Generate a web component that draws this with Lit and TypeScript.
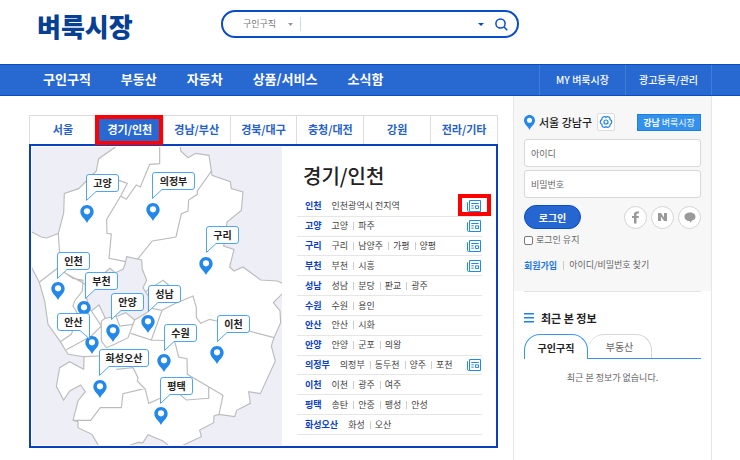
import { LitElement, html, svg, css } from "lit";
import { customElement, property } from "lit/decorators.js";
import { classMap } from "lit/directives/class-map.js";
import { styleMap } from "lit/directives/style-map.js";

interface Pin {
  name: string;
  x: number;
  y: number;
  w: number;
  pinX: number;
  pinY: number;
  flip?: boolean;
}

interface Region {
  name: string;
  towns: string[];
  paper?: boolean;
  marked?: boolean;
}

// Label position (x, y), label width and the point of the marker, in map pixels.
const PINS: Pin[] = [
  { name: "고양", x: 54, y: 27, w: 33, pinX: 55, pinY: 76 },
  { name: "의정부", x: 120, y: 25, w: 43, pinX: 121, pinY: 74 },
  { name: "구리", x: 174, y: 79, w: 33, pinX: 174, pinY: 128 },
  { name: "인천", x: 25, y: 105, w: 33, pinX: 26, pinY: 153 },
  { name: "부천", x: 53, y: 125, w: 33, pinX: 52, pinY: 172 },
  { name: "안양", x: 79, y: 146, w: 33, pinX: 81, pinY: 195 },
  { name: "성남", x: 116, y: 138, w: 33, pinX: 116, pinY: 186 },
  { name: "안산", x: 25, y: 166, w: 33, pinX: 60, pinY: 207, flip: true },
  { name: "수원", x: 132, y: 177, w: 33, pinX: 132, pinY: 225 },
  { name: "이천", x: 185, y: 168, w: 33, pinX: 185, pinY: 217 },
  { name: "화성오산", x: 67, y: 202, w: 50, pinX: 68, pinY: 251 },
  { name: "평택", x: 128, y: 230, w: 33, pinX: 129, pinY: 278 },
];

const REGIONS: Region[] = [
  { name: "인천", towns: ["인천광역시 전지역"], paper: true, marked: true },
  { name: "고양", towns: ["고양", "파주"], paper: true },
  { name: "구리", towns: ["구리", "남양주", "가평", "양평"], paper: true },
  { name: "부천", towns: ["부천", "시흥"], paper: true },
  { name: "성남", towns: ["성남", "분당", "판교", "광주"] },
  { name: "수원", towns: ["수원", "용인"] },
  { name: "안산", towns: ["안산", "시화"] },
  { name: "안양", towns: ["안양", "군포", "의왕"] },
  { name: "의정부", towns: ["의정부", "동두천", "양주", "포천"], paper: true },
  { name: "이천", towns: ["이천", "광주", "여주"] },
  { name: "평택", towns: ["송탄", "안중", "팽성", "안성"] },
  { name: "화성오산", towns: ["화성", "오산"] },
];

const LAND =
  "M268 14 212 53 205 90 152 143 109 157 107 216 91 278 55 291 40 288 6 270V370L34 424 50 480 60 550 97 602 120 640 168 647 167 685 125 662 95 680 85 736 107 777 125 750 158 732 172 752 150 780 135 838 150 842 150 860 192 880 218 925 270 914 300 915 330 904 345 905 360 881 405 900 435 925 460 915 520 887 515 867 557 845 558 825 573 820 620 827 626 808 667 787 662 752 697 758 742 660 730 615 738 590 758 545 756 510 736 485 766 455V428L748 420 698 417 645 378 618 390 605 378 618 325 587 315 597 243 640 208 645 153 610 143 607 122 552 103 543 43 503 37 480 50 458 30 457 14Z";

const SEOUL =
  "M296 347 341 357 343 385 356 418 345 440 352 452 361 465 361 512 320 537 293 515 270 525 232 532 213 492 190 510 183 500 172 455 172 430 230 395 246 382 262 395 285 385 291 370Z";

const BORDERS = [
  "M395 14V68L365 70 337 138 325 132 295 175 278 165 236 235 237 277 250 279 243 352 293 362",
  "M272 118 298 127 278 165",
  "M552 88 508 150 508 160 482 177 480 210 460 218 444 288 373 300 328 355",
  "M91 278 97 370 110 395 135 412 165 418 163 450 140 480 135 495 150 520",
  "M34 424 90 380M110 395 172 430",
  "M97 602 130 580 137 560M115 626 190 585 220 555 190 510",
  "M168 647 215 645M220 555V600L235 620 260 610 300 590 315 550 275 555 265 528M232 532 220 540V555",
  "M315 550 320 537M308 577 370 597 402 508 361 500M402 508 440 488 495 465 505 500V530L518 547 545 535 565 540 663 570 738 590",
  "M352 452 405 418 425 435",
  "M370 597 440 600 452 648 477 653 478 700 585 763 573 820",
  "M542 738V772L475 777 455 760",
  "M265 685 315 680 330 710 328 720 352 745 362 787 397 772",
  "M352 742 285 758 280 800 217 800 188 838 135 838",
];

const FONT = css`"Noto Sans CJK KR", "Liberation Sans", sans-serif`;

const base = css`
  * {
    box-sizing: border-box;
  }
  a {
    color: inherit;
    text-decoration: none;
  }
  ul {
    list-style: none;
    margin: 0;
    padding: 0;
  }
  h1,
  h2 {
    margin: 0;
  }
  button,
  input,
  select {
    font-family: inherit;
    margin: 0;
  }
  svg {
    display: block;
  }
`;

const markerShape = svg`<path d="M10 0C4.400 0 0 4.400 0 10c0 7 7 10 10 17 3-7 10-10 10-17C20 4.400 15.600 0 10 0z" fill="#2488ea"/><circle cx="10" cy="9.500" r="4.600" fill="#fff"/>`;

@customElement("region-map")
class RegionMap extends LitElement {
  static styles = [
    base,
    css`
      :host {
        display: block;
        flex: none;
        padding: 1px;
      }
      .map {
        position: relative;
        width: 250px;
      }
      .land {
        width: 100%;
        background: #eeeff6;
      }
      .callout,
      .marker {
        position: absolute;
        overflow: visible;
      }
      .label {
        position: absolute;
        height: 17px;
        line-height: 17px;
        text-align: center;
        font-size: 10px;
        font-weight: 700;
        color: #222;
      }
    `,
  ];

  private callout(w: number, flip?: boolean) {
    return flip
      ? `M3 .500H${w - 3}Q${w - 0.5} .500 ${w - 0.5} 3V26L${w - 10} 17.500H3Q.500 17.500 .500 15V3Q.500 .500 3 .500Z`
      : `M3 .500H${w - 3}Q${w - 0.5} .500 ${w - 0.5} 3V15Q${w - 0.5} 17.500 ${w - 3} 17.500H10L.500 26.500V3Q.500 .500 3 .500Z`;
  }

  render() {
    return html`<div class="map">
      <svg class="land" viewBox="12 18 750 894" aria-hidden="true">
        <path d=${LAND} fill="#fff" stroke="#bcbcbe" stroke-width="3.500" />
        <path d=${SEOUL} fill="#eeeff6" stroke="#bcbcbe" stroke-width="3.500" />
        <path d=${BORDERS.join("")} fill="none" stroke="#bcbcbe" stroke-width="3.500" />
      </svg>
      ${PINS.map(
        (p) => html`<svg
          class="marker"
          width="14"
          height="18"
          viewBox="0 0 20 27"
          style=${styleMap({ left: `${p.pinX - 7}px`, top: `${p.pinY - 18}px` })}
        >
          ${markerShape}
        </svg>`
      )}
      ${PINS.map(
        (p) => html`<svg
            class="callout"
            width=${p.w}
            height="27"
            style=${styleMap({ left: `${p.x}px`, top: `${p.y}px` })}
          >
            <path d=${this.callout(p.w, p.flip)} fill="#fff" stroke="#4fa5f3" />
          </svg>
          <a
            class="label"
            href="#"
            style=${styleMap({ left: `${p.x}px`, top: `${p.y}px`, width: `${p.w}px` })}
            >${p.name}</a
          >`
      )}
    </div>`;
  }
}

@customElement("region-list")
class RegionList extends LitElement {
  @property() heading = "";

  static styles = [
    base,
    css`
      :host {
        display: flex;
        flex-direction: column;
        flex: 1;
        min-width: 0;
        padding: 9px 14px 11px;
      }
      .title {
        padding-left: 6px;
        font-size: 20px;
        line-height: 42px;
        font-weight: 500;
        color: #222;
      }
      .rows {
        display: flex;
        flex-direction: column;
        flex: 1;
      }
      .row {
        position: relative;
        display: flex;
        align-items: center;
        flex: 1;
        gap: 10px;
        padding: 0 1px 0 8px;
        border-bottom: 1px solid #e6e6e6;
        font-size: 9px;
        line-height: 14px;
      }
      .name {
        color: #0a3fc4;
        font-weight: 700;
      }
      .towns {
        display: flex;
        align-items: center;
        flex: 1;
        color: #444;
      }
      .town + .town {
        margin-left: 5px;
        padding-left: 5px;
        background: linear-gradient(#ccc, #ccc) left center / 1px 8px no-repeat;
      }
      .mark {
        position: absolute;
        right: -9px;
        top: -3px;
        width: 33px;
        height: 22px;
        border: 4px solid #f00;
      }
    `,
  ];

  render() {
    return html`<h1 class="title">${this.heading}</h1>
      <ul class="rows">
        ${REGIONS.map(
          (r) => html`<li class="row">
            <a class="name" href="#">${r.name}</a>
            <span class="towns">${r.towns.map((t) => html`<a class="town" href="#">${t}</a>`)}</span>
            ${r.paper
              ? html`<a href="#" aria-label="신문">
                  <svg width="15" height="12" viewBox="0 0 45 36" fill="none" stroke="#2488ea" stroke-width="3">
                    <path d="M10.500 1.500H43.500V34.500H10.500ZM4.500 7V31Q4.500 34.500 8 34.500H10.500M16 10.500H38M16 17.500H23M16 24.500H23M28.500 17.500H37.500V25.500H28.500Z" />
                  </svg>
                </a>`
              : null}
            ${r.marked ? html`<span class="mark"></span>` : null}
          </li>`
        )}
      </ul>`;
  }
}

@customElement("side-panel")
class SidePanel extends LitElement {
  static styles = [
    base,
    css`
      :host {
        display: block;
        flex: none;
        width: 199px;
        border: solid #e6e6e6;
        border-width: 0 1px;
        font-size: 9px;
        line-height: 14px;
        color: #666;
      }
      .account {
        height: 195px;
        padding: 17px 10px 0;
        background: #f7f7f7;
      }
      .place {
        display: flex;
        align-items: center;
        height: 18px;
      }
      .where {
        margin: 0 5px 0 4px;
        font-size: 11px;
        font-weight: 500;
        color: #222;
      }
      .gear {
        display: grid;
        place-items: center;
        width: 18px;
        height: 18px;
        padding: 0;
        border: 1px solid #ddd;
        border-radius: 2px;
        background: #fff;
      }
      .local {
        margin-left: auto;
        width: 64px;
        height: 17px;
        line-height: 15px;
        border: 1px solid #1b7fe0;
        background: #3391ec;
        color: #fff;
        font-size: 9px;
        text-align: center;
      }
      .fields {
        display: grid;
        gap: 3px;
        margin-top: 8px;
      }
      .field {
        width: 100%;
        height: 28px;
        padding: 0 6px;
        border: 1px solid #d8d8d8;
        border-radius: 3px;
        background: #fff;
        font-size: 9px;
      }
      .field::placeholder {
        color: #666;
      }
      .actions {
        display: flex;
        align-items: center;
        gap: 4px;
        margin-top: 7px;
      }
      .login {
        width: 57px;
        height: 24px;
        margin-right: auto;
        padding: 0;
        border: 1px solid #0a4cc8;
        border-radius: 12px;
        background: #2666d0;
        color: #fff;
        font-size: 10px;
        font-weight: 700;
      }
      .social {
        display: grid;
        place-items: center;
        width: 23px;
        height: 23px;
        padding: 0;
        border: 1px solid #d4d4d4;
        border-radius: 50%;
        background: #fff;
      }
      .keep {
        display: flex;
        align-items: center;
        gap: 3px;
        margin-top: 4px;
      }
      .check {
        appearance: none;
        width: 9px;
        height: 9px;
        border: 1px solid #777;
        border-radius: 2px;
        background: #fff;
      }
      .help {
        display: flex;
        align-items: center;
        margin-top: 11px;
      }
      .join {
        margin-right: 5px;
        padding-right: 6px;
        border-right: 1px solid #ccc;
        line-height: 9px;
        font-weight: 700;
        color: #1c78e0;
      }
      .recent {
        margin: 0 10px;
        border-top: 1px solid #e2e2e2;
      }
      .recent-title {
        display: flex;
        align-items: center;
        gap: 7px;
        padding: 17px 0 7px;
        font-size: 11px;
        line-height: 18px;
        color: #222;
      }
      .tabs {
        display: flex;
        height: 25px;
        background: linear-gradient(#3a94ee, #3a94ee) left bottom / 100% 1px no-repeat;
      }
      .tab {
        width: 64px;
        height: 24px;
        padding: 0;
        border: 1px solid #d6d6d6;
        border-bottom: 0;
        border-left: 0;
        border-radius: 16px 16px 0 0;
        background: #fff;
        font-size: 10px;
        color: #666;
      }
      .tab.on {
        height: 25px;
        border: 1px solid #3a94ee;
        border-bottom: 0;
        font-weight: 700;
        color: #222;
      }
      .empty {
        margin: 12px 0 0;
        text-align: center;
      }
    `,
  ];

  render() {
    return html`<section class="account">
        <div class="place">
          <svg width="11" height="15" viewBox="0 0 20 27" preserveAspectRatio="none">${markerShape}</svg>
          <span class="where">서울 강남구</span>
          <button class="gear" aria-label="지역 설정">
            <svg width="14" height="14" viewBox="3 3 22 22" fill="none" stroke="#1c80e4" stroke-width="1.800">
              <path d="M14 6.500A4 4 0 0 1 20.500 10.250A4 4 0 0 1 20.500 17.750A4 4 0 0 1 14 21.500A4 4 0 0 1 7.500 17.750A4 4 0 0 1 7.500 10.250A4 4 0 0 1 14 6.500Z" />
              <circle cx="14" cy="14" r="3.200" />
            </svg>
          </button>
          <a class="local" href="#"><b>강남</b> 벼룩시장</a>
        </div>
        <div class="fields">
          <input class="field" type="text" placeholder="아이디" aria-label="아이디" />
          <input class="field" type="password" placeholder="비밀번호" aria-label="비밀번호" />
        </div>
        <div class="actions">
          <button class="login">로그인</button>
          <button class="social" aria-label="페이스북">
            <svg width="9" height="13" viewBox="0 0 18 26" fill="#999">
              <path d="M6 25V14H2V10H6V7Q6 1 12 1H16V5H13Q11 5 11 7.500V10H16L15 14H11V25Z" />
            </svg>
          </button>
          <button class="social" aria-label="네이버">
            <svg width="9" height="8" viewBox="0 0 18 16" fill="#999">
              <path d="M0 0H6L12 9V0H18V16H12L6 7V16H0Z" />
            </svg>
          </button>
          <button class="social" aria-label="카카오">
            <svg width="12" height="11" viewBox="0 0 24 22" fill="#999">
              <path d="M12 1C5.500 1 1 4.500 1 9.500S5.500 18 11 18L14 22 15 17.600C20 16.800 23 13.500 23 9.500 23 4.500 18.500 1 12 1z" />
            </svg>
          </button>
        </div>
        <label class="keep"><input class="check" type="checkbox" />로그인 유지</label>
        <div class="help">
          <a class="join" href="#">회원가입</a>
          <a href="#">아이디/비밀번호 찾기</a>
        </div>
      </section>
      <section class="recent">
        <h2 class="recent-title">
          <svg width="10" height="10" viewBox="0 0 10 10" fill="#1c80e4"><path d="M0 0H10V1.500H0ZM0 4H10V5.500H0ZM0 8H10V9.500H0Z" /></svg>
          최근 본 정보
        </h2>
        <div class="tabs">
          <button class="tab on">구인구직</button>
          <button class="tab">부동산</button>
        </div>
        <p class="empty">최근 본 정보가 없습니다.</p>
      </section>`;
  }
}

@customElement("app-root")
class AppRoot extends LitElement {
  static styles = [
    base,
    css`
      :host {
        display: flex;
        flex-direction: column;
        min-height: 100vh;
        background: #fff;
        font-family: ${FONT};
      }
      .header {
        display: flex;
        align-items: flex-start;
        height: 64px;
        padding: 10px 28px 0 37px;
      }
      .logo {
        width: 184px;
        font-size: 26px;
        line-height: 32px;
        font-weight: 900;
        color: #073f92;
      }
      .search {
        display: flex;
        align-items: center;
        width: 298px;
        height: 28px;
        padding: 0 9px 0 20px;
        border: 2px solid #0a4cc8;
        border-radius: 14px;
      }
      .kind {
        appearance: none;
        width: 56px;
        height: 14px;
        padding: 0;
        border: 0;
        background: none;
        font-size: 9px;
        line-height: 14px;
        color: #777;
      }
      .kind-wrap {
        display: flex;
        align-items: center;
        border-right: 1px solid #c4dcf4;
      }
      .kind-wrap svg {
        margin: 0 7px 0 -11px;
        pointer-events: none;
      }
      .query {
        flex: 1;
        min-width: 0;
        height: 18px;
        padding: 0 6px;
        border: 0;
        outline: 0;
        background: none;
        font-size: 10px;
      }
      .icon {
        padding: 0;
        border: 0;
        background: none;
      }
      .go {
        margin-left: 11px;
      }
      .nav {
        display: flex;
        height: 32px;
        padding: 0 28px 0 43px;
        border: solid #0a4cc8;
        border-width: 1px 0;
        background: #2868d1;
        color: #fff;
        line-height: 28px;
      }
      .menu {
        display: flex;
        flex: 1;
        gap: 30px;
        font-size: 13px;
        font-weight: 700;
      }
      .side-menu {
        display: flex;
        border-right: 1px solid #447cd9;
        font-size: 10px;
        line-height: 30px;
        font-weight: 500;
      }
      .side-menu a {
        width: 86px;
        border-left: 1px solid #447cd9;
        text-align: center;
      }
      .body {
        display: flex;
        flex: 1;
        gap: 15px;
        padding: 0 28px 0 29px;
      }
      .main {
        flex: 1;
        min-width: 0;
        padding-top: 19px;
      }
      .areas {
        display: flex;
        height: 29px;
        border: solid #dcdcdc;
        border-width: 1px 1px 0;
      }
      .area {
        position: relative;
        flex: 1;
        padding: 0 0 2px;
        border: 0;
        background: #fff;
        font-size: 11px;
        font-weight: 700;
        color: #2461c8;
      }
      .area + .area {
        border-left: 1px solid #dcdcdc;
      }
      .area.on {
        background: #2868d1;
        color: #fff;
      }
      .area.on::after {
        content: "";
        position: absolute;
        inset: -1px 0 -1px -2px;
        border: 4px solid #f00;
      }
      .board {
        display: flex;
        border: 2px solid #0a3fbe;
      }
    `,
  ];

  render() {
    const areas = ["서울", "경기/인천", "경남/부산", "경북/대구", "충청/대전", "강원", "전라/기타"];
    return html`<header class="header">
        <a class="logo" href="#">벼룩시장</a>
        <form class="search">
          <span class="kind-wrap">
            <select class="kind" aria-label="분류">
              <option>구인구직</option>
            </select>
            <svg width="5" height="3" viewBox="0 0 5 3" fill="#999"><path d="M0 0H5L2.500 3Z" /></svg>
          </span>
          <input class="query" type="text" aria-label="검색어" />
          <button class="icon" type="button" aria-label="검색어 목록">
            <svg width="6" height="3" viewBox="0 0 6 3" fill="#0a4cc8"><path d="M0 0H6L3 3Z" /></svg>
          </button>
          <button class="icon go" type="button" aria-label="검색">
            <svg width="13" height="13" viewBox="0 0 13 13" fill="none" stroke="#0a4cc8" stroke-width="1.500">
              <circle cx="5.500" cy="5.500" r="4.600" />
              <path d="M9 9 12.300 12.300" />
            </svg>
          </button>
        </form>
      </header>
      <nav class="nav">
        <div class="menu">
          ${["구인구직", "부동산", "자동차", "상품/서비스", "소식함"].map((m) => html`<a href="#">${m}</a>`)}
        </div>
        <div class="side-menu">
          <a href="#">MY 벼룩시장</a>
          <a href="#">광고등록/관리</a>
        </div>
      </nav>
      <div class="body">
        <main class="main">
          <div class="areas">
            ${areas.map(
              (a, i) => html`<button class=${classMap({ area: true, on: i === 1 })}>${a}</button>`
            )}
          </div>
          <div class="board">
            <region-map></region-map>
            <region-list heading="경기/인천"></region-list>
          </div>
        </main>
        <side-panel></side-panel>
      </div>`;
  }
}
